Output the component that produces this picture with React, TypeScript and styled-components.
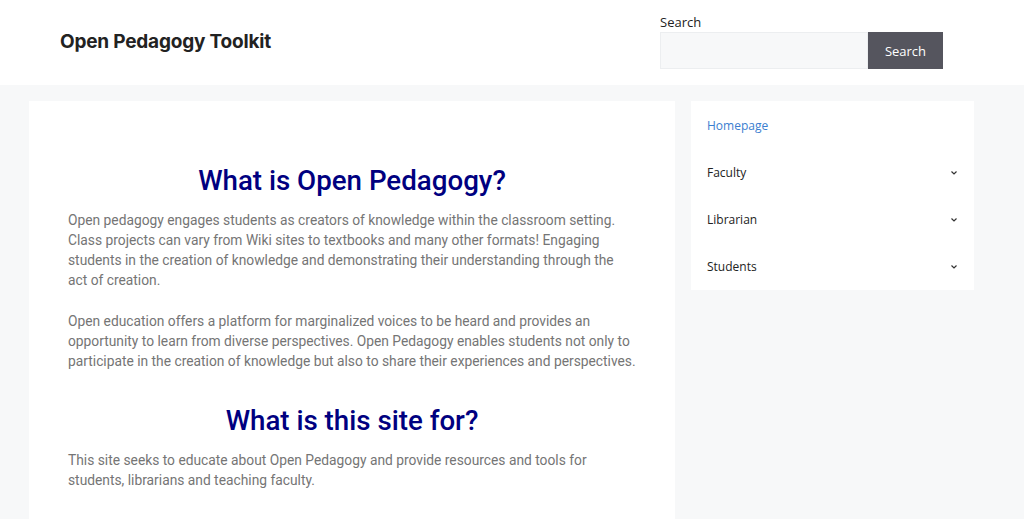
import React from "react";
import styled, { createGlobalStyle } from "styled-components";

const Global = createGlobalStyle`
  html, body { margin: 0; padding: 0; background: #f7f8f9; }
  body { font-family: Roboto, "Liberation Sans", sans-serif; }
`;

const Header = styled.header`
  height: 85px; background: #fff; display: flex; align-items: flex-start;
  justify-content: space-between; padding: 0 81px 0 60px; box-sizing: border-box;
`;
const Title = styled.div`
  font-family: Inter, "Liberation Sans", sans-serif; font-weight: 700; font-size: 19px;
  color: #222; margin-top: 30px; letter-spacing: -0.2px;
`;
const SearchBox = styled.div` margin-top: 14px; display: flex; flex-direction: column; `;
const Label = styled.label` font-size: 13px; color: #222; line-height: 16px; margin-bottom: 2px; font-family: "Open Sans", sans-serif;`;
const SearchRow = styled.div` display: flex; `;
const Input = styled.div`
  width: 206px; height: 35px; background: #f7f8f9; border: 1px solid #eceef0;
`;
const Button = styled.div`
  width: 75px; height: 37px; background: #55555e; color: #fff; font-size: 13px;
  display: flex; align-items: center; justify-content: center; font-family: "Open Sans", sans-serif;
`;
const Main = styled.main`
  display: flex; gap: 16px; padding: 16px 0 0 29px; align-items: flex-start;
`;
const Card = styled.article`
  width: 646px; background: #fff; padding: 63px 39px 30px; box-sizing: border-box; min-height: 430px;
`;
const H = styled.h2<{ $mt?: number }>`
  font-size: 27.7px; font-weight: 500; color: #000080; text-align: center;
  margin: ${p => p.$mt ?? 0}px 0 12px; line-height: 34px;
`;
const P = styled.p`
  font-size: 13.8px; line-height: 20px; color: #757575; margin: 0 0 21px;
`;
const Side = styled.nav`
  width: 283px; background: #fff; padding: 1px 16px 0; box-sizing: border-box;
`;
const Item = styled.div<{ $active?: boolean }>`
  height: 47px; display: flex; align-items: center; justify-content: space-between;
  font-size: 12px; color: ${p => (p.$active ? "#3b7ed0" : "#222")}; font-family: "Open Sans", sans-serif;
`;
const Chev = () => (
  <svg width="8" height="6" viewBox="0 0 8 6"><path d="M1.5 1.5 4 4l2.5-2.5" fill="none" stroke="#333" strokeWidth="1.2" /></svg>
);

export default function App() {
  return (
    <>
      <Global />
      <Header>
        <Title>Open Pedagogy Toolkit</Title>
        <SearchBox>
          <Label>Search</Label>
          <SearchRow><Input /><Button>Search</Button></SearchRow>
        </SearchBox>
      </Header>
      <Main>
        <Card>
          <H>What is Open Pedagogy?</H>
          <P>Open pedagogy engages students as creators of knowledge within the classroom setting. Class projects can vary from Wiki sites to textbooks and many other formats! Engaging students in the creation of knowledge and demonstrating their understanding through the act of creation.</P>
          <P>Open education offers a platform for marginalized voices to be heard and provides an opportunity to learn from diverse perspectives. Open Pedagogy enables students not only to participate in the creation of knowledge but also to share their experiences and perspectives.</P>
          <H $mt={33}>What is this site for?</H>
          <P>This site seeks to educate about Open Pedagogy and provide resources and tools for students, librarians and teaching faculty.</P>
        </Card>
        <Side>
          <Item $active>Homepage</Item>
          <Item>Faculty<Chev /></Item>
          <Item>Librarian<Chev /></Item>
          <Item>Students<Chev /></Item>
        </Side>
      </Main>
    </>
  );
}
